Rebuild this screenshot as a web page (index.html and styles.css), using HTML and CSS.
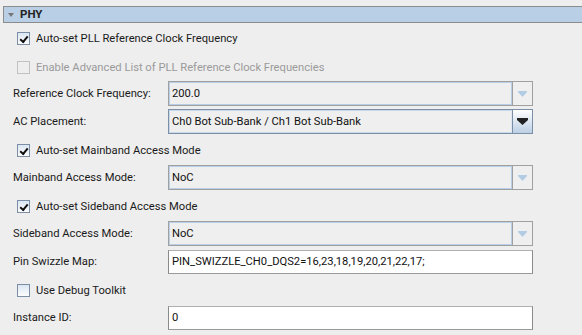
FILE: index.html
```html
<!DOCTYPE html>
<html lang="en">
<head>
  <meta charset="utf-8"/>
  <title>PHY</title>
  <link rel="stylesheet" href="styles.css">
</head>
<body>
  <div class="section-head"><span class="caret"></span>PHY</div>

  <div class="panel">
    <label class="check-row"><span class="box checked"></span>Auto-set PLL Reference Clock Frequency</label>
    <label class="check-row disabled"><span class="box"></span>Enable Advanced List of PLL Reference Clock Frequencies</label>

    <div class="field-row first">
      <span class="label">Reference Clock Frequency:</span>
      <div class="combo off"><span class="value">200.0</span><span class="arrow"><svg width="9" height="6" viewBox="0 0 9 6"><path d="M0 0H9V1L4.5 6L0 1Z"/></svg></span></div>
    </div>
    <div class="field-row">
      <span class="label">AC Placement:</span>
      <div class="combo"><span class="value">Ch0 Bot Sub-Bank / Ch1 Bot Sub-Bank</span><span class="arrow"><svg width="11" height="7" viewBox="0 0 11 7"><path d="M0 0H11V2L5.5 7L0 2Z"/></svg></span></div>
    </div>

    <label class="check-row mid"><span class="box checked"></span>Auto-set Mainband Access Mode</label>
    <div class="field-row">
      <span class="label">Mainband Access Mode:</span>
      <div class="combo off"><span class="value">NoC</span><span class="arrow"><svg width="9" height="6" viewBox="0 0 9 6"><path d="M0 0H9V1L4.5 6L0 1Z"/></svg></span></div>
    </div>

    <label class="check-row mid"><span class="box checked"></span>Auto-set Sideband Access Mode</label>
    <div class="field-row">
      <span class="label">Sideband Access Mode:</span>
      <div class="combo off"><span class="value">NoC</span><span class="arrow"><svg width="9" height="6" viewBox="0 0 9 6"><path d="M0 0H9V1L4.5 6L0 1Z"/></svg></span></div>
    </div>
    <div class="field-row">
      <span class="label">Pin Swizzle Map:</span>
      <div class="text-field">PIN_SWIZZLE_CH0_DQS2=16,23,18,19,20,21,22,17;</div>
    </div>

    <label class="check-row mid"><span class="box"></span>Use Debug Toolkit</label>
    <div class="field-row">
      <span class="label">Instance ID:</span>
      <div class="text-field">0</div>
    </div>
  </div>
</body>
</html>
```

FILE: styles.css
```css
body { margin:0; background:#eeeeee; color:#1a1a1a; font-family:Roboto, "Liberation Sans", sans-serif; font-size:11.2px; overflow:hidden; }

.section-head { margin:6px 0 0 3px; height:15px; line-height:15px; background:#b8cfe5; border:1px solid #8c8c8c; border-right:none; font-weight:bold; font-size:11.5px; color:#222; display:flex; align-items:center; }
.caret { width:0; height:0; border-left:3px solid transparent; border-right:3px solid transparent; border-top:4px solid #777; margin:0 6px 0 4px; }

.panel { display:flex; flex-direction:column; padding-left:13px; width:520px; }

.check-row { height:29px; box-sizing:border-box; padding-top:2px; display:flex; align-items:center; padding-left:4px; color:#1a1a1a; }
.check-row.mid { height:31px; }
.check-row.disabled { color:#9a9a9a; }

.box { width:11px; height:11px; border:1px solid #7b8ea6; background:linear-gradient(#dbe6f2, #fdfdfe); margin-right:6px; position:relative; flex:none; }
.check-row.disabled .box { border-color:#c2c2c2; background:#eeeeee; }
.box.checked::after { content:""; position:absolute; left:2px; top:3px; width:6px; height:3px; border-left:2px solid #111; border-bottom:2px solid #111; transform:rotate(-50deg); }

.field-row { display:flex; align-items:center; height:25px; margin-top:3px; }
.field-row.first { margin-top:1px; }
.check-row + .field-row { margin-top:0; }
.label { width:155px; flex:none; }

.combo { flex:none; width:363px; height:23px; border:1px solid #a0a0a0; display:flex; background:#efefef; }
.combo .value { flex:1; border:1px solid #b8cfe5; padding-left:2px; display:flex; align-items:center; color:#111; }
.combo .arrow { width:19px; border-left:1px solid #a0a0a0; display:flex; align-items:center; justify-content:center; }
.combo.off .arrow svg { fill:#b3cce6; }
.combo:not(.off) { border-color:#7b8fa6; }
.combo:not(.off) .value { border-color:#c9d8e8 #dfe8f2 #c9d8e8 #c9d8e8; }
.combo:not(.off) .arrow { border-left-color:#7b8fa6; background:linear-gradient(#ffffff, #bccfe4); }
.combo:not(.off) .arrow svg { fill:#222; }

.text-field { flex:none; width:360px; height:22px; line-height:22px; padding-left:3px; background:#fff; border:1px solid #9a9a9a; border-color:#b0b0b0 #8a8a8a #9a9a9a #8a8a8a; color:#111; }
```
